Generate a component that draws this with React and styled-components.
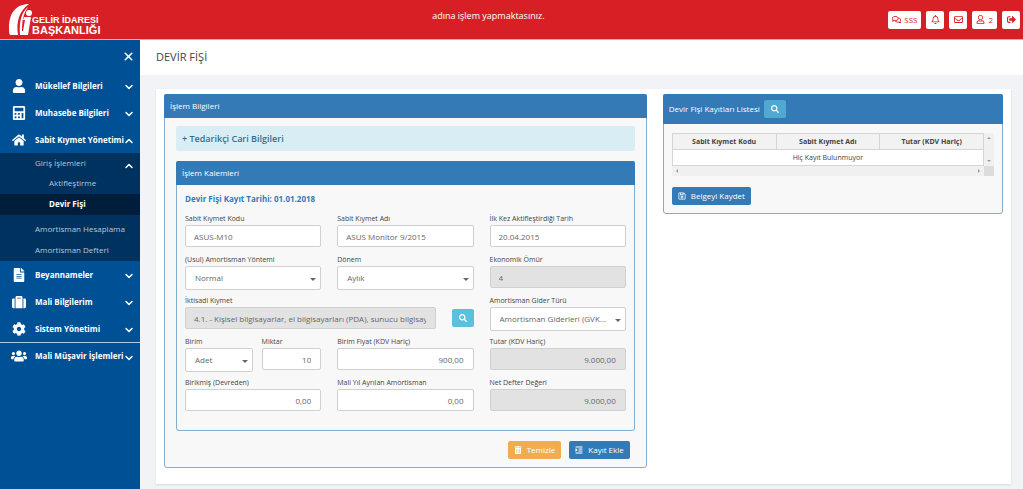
import React, { useState } from 'react';
import styled, { createGlobalStyle } from 'styled-components';
import {
  FaUser, FaCalculator, FaHome, FaFileAlt, FaSuitcase, FaCog, FaUsers,
  FaSearch, FaSignOutAlt, FaRegBell, FaRegEnvelope, FaRegUser, FaRegComments,
  FaIndent, FaRegSave, FaTrashAlt
} from 'react-icons/fa';
import { FiChevronDown, FiChevronUp, FiX } from 'react-icons/fi';

const GlobalStyle = createGlobalStyle`
  * {
    box-sizing: border-box;
  }

  body {
    margin: 0;
    background: #f2f3f7;
    color: #444;
    font-family: 'Open Sans', sans-serif;
    font-size: 8px;
    line-height: 12px;
  }

  button, input, select {
    font: inherit;
    color: inherit;
  }
`;

const Header = styled.header`
  display: grid;
  grid-template-columns: auto 1fr auto;
  align-items: center;
  height: 40px;
  padding: 0 3px 0 8px;
  background: #d91f26;
  border-bottom: 1px solid #f0a0a2;
  color: #fff;
`;

const Logo = styled.a`
  display: flex;
  align-items: center;
  color: #fff;
  text-decoration: none;
`;

const LogoText = styled.span`
  display: grid;
  padding-top: 13px;
  font: bold 9px/9px 'Liberation Sans', Arial, sans-serif;
`;

const LogoWide = styled.span`
  font-size: 11px;
  line-height: 11px;
`;

const Notice = styled.div`
  padding-bottom: 8px;
  font-size: 9px;
  text-align: center;
`;

const HeaderActions = styled.nav`
  display: flex;
  justify-content: flex-end;
  gap: 5px;
  padding-left: 12px;
`;

const HeaderButton = styled.button`
  display: flex;
  align-items: center;
  justify-content: center;
  gap: 3px;
  min-width: 18px;
  height: 18px;
  padding: 0 4px;
  border: 0;
  border-radius: 2px;
  background: #fff;
  color: #d91f26;
  cursor: pointer;

  svg {
    font-size: 9px;
  }
`;

const Layout = styled.div`
  display: grid;
  grid-template-columns: 140px minmax(0, 1fr);
  min-height: calc(100vh - 40px);
`;

const Sidebar = styled.aside`
  background: #005096;
  color: #fff;
`;

const CloseButton = styled.button`
  display: flex;
  margin: 0 5px 0 auto;
  padding: 10px 0 9px;
  border: 0;
  background: none;
  font-size: 13px;
  cursor: pointer;
`;

const MenuButton = styled.button`
  display: grid;
  grid-template-columns: 22px minmax(0, 1fr) 12px;
  gap: 5px;
  align-items: center;
  width: 100%;
  height: 27px;
  padding: 0 5px 0 8px;
  border: 0;
  border-top: ${props => props.$divided ? '1px solid #a9cdea' : '0'};
  background: none;
  font-weight: 700;
  text-align: left;
  white-space: nowrap;
  cursor: pointer;

  > svg:first-child {
    justify-self: center;
    font-size: ${props => props.$divided ? '16px' : '14px'};
  }

  > svg:last-child {
    margin-top: 3px;
    font-size: 12px;
    stroke-width: 3;
  }
`;

const SubMenu = styled.div`
  background: #00325f;
`;

const SubGroup = styled.div`
  margin-bottom: 4px;
`;

const SubToggle = styled.button`
  display: flex;
  justify-content: space-between;
  align-items: center;
  width: 100%;
  height: 20px;
  padding: 0 5px 0 35px;
  border: 0;
  background: none;
  color: #b8c9d9;
  cursor: pointer;

  svg {
    margin-top: 6px;
    color: #fff;
    font-size: 12px;
    stroke-width: 3;
  }
`;

const SubLink = styled.a`
  display: block;
  padding: 4px 0 5px ${props => props.$nested ? '49px' : '35px'};
  background: ${props => props.$active ? '#001d3b' : 'none'};
  color: ${props => props.$active ? '#fff' : '#b8c9d9'};
  font-weight: ${props => props.$active ? 700 : 400};
  text-decoration: none;
`;

const PageTitle = styled.h1`
  margin: 0;
  padding: 9px 16px 10px;
  background: #fff;
  font-size: 11px;
  font-weight: 400;
  line-height: 16px;
`;

const Card = styled.div`
  display: grid;
  grid-template-columns: 7fr 5fr;
  align-items: start;
  margin: 14px 12px 4px 16px;
  padding: 5px 0 16px;
  background: #fff;
  box-shadow: 0 1px 2px #d8dade;
`;

const Column = styled.div`
  min-width: 0;
  padding: 0 8px;
`;

const Panel = styled.section`
  border: 1px solid #80add2;
  border-radius: 3px;
  background: #f8f8f8;
`;

const PanelHeader = styled.h2`
  display: flex;
  align-items: center;
  gap: 4px;
  height: ${props => props.$tall ? '30px' : '24px'};
  margin: -1px -1px 0;
  padding: 0 6px;
  border-radius: 2px 2px 0 0;
  background: #337ab7;
  color: #fff;
  font-size: 8px;
  font-weight: 400;
`;

const PanelBody = styled.div`
  padding: 8px 11px 8px;
`;

const Collapsed = styled.button`
  display: block;
  width: 100%;
  height: 25px;
  margin-bottom: 10px;
  padding: 0 6px;
  border: 0;
  border-radius: 2px;
  background: #d9edf4;
  color: #31708f;
  font-size: 9px;
  font-weight: 600;
  text-align: left;
  cursor: pointer;
`;

const FormBody = styled.form`
  padding: 8px 8px 17px;
`;

const FormDate = styled.h3`
  margin: 0 0 9px;
  color: #337ab7;
  font-size: 8px;
  font-weight: 700;
`;

const FieldGrid = styled.div`
  display: grid;
  grid-template-columns: repeat(3, minmax(0, 1fr));
  grid-auto-rows: 35px;
  gap: 6px 16px;
`;

const FieldBox = styled.div`
  grid-column: span ${props => props.$span || 1};
  min-width: 0;
`;

const Label = styled.label`
  display: block;
  height: 11px;
  font-size: 7px;
  line-height: 10px;
  white-space: nowrap;
`;

const Input = styled.input`
  display: block;
  width: 100%;
  min-width: 0;
  height: 22px;
  padding: 0 9px 0 8px;
  border: 1px solid #d0d0d0;
  border-radius: 2px;
  background: #fff;
  color: #666;
  text-align: ${props => props.$numeric ? 'right' : 'left'};

  &:read-only {
    background: #e2e2e2;
  }
`;

const SelectBox = styled.div`
  position: relative;

  &::after {
    content: '';
    position: absolute;
    top: 12px;
    right: 5px;
    border: 3px solid transparent;
    border-top-color: #666;
    border-bottom: 0;
    pointer-events: none;
  }
`;

const Select = styled.select`
  display: block;
  width: 100%;
  height: 24px;
  padding: 0 16px 0 9px;
  border: 1px solid #d0d0d0;
  border-radius: 2px;
  appearance: none;
  background: #fff;
  color: #666;
  text-overflow: ellipsis;
`;

const Pair = styled.div`
  display: grid;
  grid-template-columns: 68fr 60fr;
  gap: 9px;
`;

const SearchRow = styled.div`
  display: flex;
  align-items: center;
  gap: 16px;
`;

const tones = {
  primary: '#337ab7',
  warning: '#f0ad4e',
  info: '#5bc0de',
  muted: '#4fa9d0'
};

const Button = styled.button`
  display: inline-flex;
  align-items: center;
  justify-content: center;
  gap: 5px;
  flex: none;
  min-width: 22px;
  height: 18px;
  padding: 0 6px;
  border: 0;
  border-radius: 2px;
  background: ${props => tones[props.$tone]};
  color: #fff;
  cursor: pointer;
`;

const Actions = styled.div`
  display: flex;
  justify-content: flex-end;
  gap: 8px;
  padding: 10px 5px 0;
`;

const ListBody = styled.div`
  padding: 9px 8px 8px;
`;

const TableFrame = styled.div`
  display: grid;
  grid-template-columns: minmax(0, 1fr) 10px;
  grid-template-rows: auto 10px;
  margin-bottom: 11px;
`;

const Table = styled.table`
  width: 100%;
  border-collapse: collapse;
  table-layout: fixed;
  background: #fff;
  font-size: 7px;
  line-height: 9px;
  text-align: center;

  th, td {
    height: 16px;
    padding: 0;
    border: 1px solid #d5d5d5;
  }

  th {
    background: #f2f2f2;
  }
`;

const ScrollTrack = styled.div`
  display: flex;
  flex-direction: ${props => props.$vertical ? 'column' : 'row'};
  align-items: center;
  justify-content: space-between;
  padding: ${props => props.$vertical ? '3px 0' : '0 3px'};
  background: #f0f0f0;
  color: #999;

  svg {
    width: 4px;
    height: 4px;
    fill: currentColor;
  }
`;

const ScrollCorner = styled.div`
  background: #dcdcdc;
`;

const Field = ({ id, label, span, children, ...rest }) => (
  <FieldBox $span={span}>
    <Label htmlFor={id}>{label}</Label>
    {children || <Input id={id} {...rest} />}
  </FieldBox>
);

const SelectField = ({ id, label, value }) => (
  <Field id={id} label={label}>
    <SelectBox>
      <Select id={id} defaultValue={value}>
        <option>{value}</option>
      </Select>
    </SelectBox>
  </Field>
);

const MenuItem = ({ icon: Icon, label, open, ...rest }) => (
  <MenuButton aria-expanded={!!open} {...rest}>
    <Icon />
    {label}
    {open ? <FiChevronUp /> : <FiChevronDown />}
  </MenuButton>
);

const GibLogo = () => (
  <Logo href="#">
    <svg width="24" height="32" viewBox="0 0 24 32" fill="#fff">
      <path d="M21 0C8 0 1 9 1 24c0 3 0 5 1 7h8c-2-13 1-24 11-31z" />
      <path d="M20 3c-6 5-9 13-8 28h8l3-18h-7l-1 3h2l-2 11h-1c0-9 1-17 6-24z" />
      <circle cx="21" cy="9" r="3" />
    </svg>
    <LogoText>
      <span>GELİR İDARESİ</span>
      <LogoWide>BAŞKANLIĞI</LogoWide>
    </LogoText>
  </Logo>
);

const App = () => {
  const [open, setOpen] = useState(true);

  return (
    <>
      <GlobalStyle />
      <Header>
        <GibLogo />
        <Notice>adına işlem yapmaktasınız.</Notice>
        <HeaderActions>
          <HeaderButton><FaRegComments /> SSS</HeaderButton>
          <HeaderButton aria-label="Bildirimler"><FaRegBell /></HeaderButton>
          <HeaderButton aria-label="Mesajlar"><FaRegEnvelope /></HeaderButton>
          <HeaderButton><FaRegUser /> 2</HeaderButton>
          <HeaderButton aria-label="Çıkış"><FaSignOutAlt /></HeaderButton>
        </HeaderActions>
      </Header>
      <Layout>
        <Sidebar>
          <CloseButton aria-label="Kapat"><FiX color="#fff" strokeWidth={3} /></CloseButton>
          <MenuItem icon={FaUser} label="Mükellef Bilgileri" />
          <MenuItem icon={FaCalculator} label="Muhasebe Bilgileri" />
          <MenuItem icon={FaHome} label="Sabit Kıymet Yönetimi" open={open} onClick={() => setOpen(!open)} />
          {open && (
            <SubMenu>
              <SubGroup>
                <SubToggle>Giriş İşlemleri <FiChevronUp /></SubToggle>
                <SubLink href="#" $nested>Aktifleştirme</SubLink>
                <SubLink href="#" $nested $active>Devir Fişi</SubLink>
              </SubGroup>
              <SubLink href="#">Amortisman Hesaplama</SubLink>
              <SubLink href="#">Amortisman Defteri</SubLink>
            </SubMenu>
          )}
          <MenuItem icon={FaFileAlt} label="Beyannameler" />
          <MenuItem icon={FaSuitcase} label="Mali Bilgilerim" />
          <MenuItem icon={FaCog} label="Sistem Yönetimi" />
          <MenuItem icon={FaUsers} label="Mali Müşavir İşlemleri" $divided />
        </Sidebar>
        <main>
          <PageTitle>DEVİR FİŞİ</PageTitle>
          <Card>
            <Column>
              <Panel>
                <PanelHeader>İşlem Bilgileri</PanelHeader>
                <PanelBody>
                  <Collapsed>+ Tedarikçi Cari Bilgileri</Collapsed>
                  <Panel>
                    <PanelHeader>İşlem Kalemleri</PanelHeader>
                    <FormBody>
                      <FormDate>Devir Fişi Kayıt Tarihi: 01.01.2018</FormDate>
                      <FieldGrid>
                        <Field id="kod" label="Sabit Kıymet Kodu" defaultValue="ASUS-M10" />
                        <Field id="ad" label="Sabit Kıymet Adı" defaultValue="ASUS Monitor 9/2015" />
                        <Field id="tarih" label="İlk Kez Aktifleştirdiği Tarih" defaultValue="20.04.2015" />
                        <SelectField id="yontem" label="(Usul) Amortisman Yöntemi" value="Normal" />
                        <SelectField id="donem" label="Dönem" value="Aylık" />
                        <Field id="omur" label="Ekonomik Ömür" defaultValue="4" readOnly />
                        <Field id="kiymet" label="İktisadi Kıymet" span={2}>
                          <SearchRow>
                            <Input
                              id="kiymet"
                              defaultValue="4.1. - Kişisel bilgisayarlar, el bilgisayarları (PDA), sunucu bilgisayarları"
                              readOnly
                            />
                            <Button type="button" $tone="info" aria-label="Ara"><FaSearch /></Button>
                          </SearchRow>
                        </Field>
                        <SelectField id="gider" label="Amortisman Gider Türü" value="Amortisman Giderleri (GVK..." />
                        <Pair>
                          <SelectField id="birim" label="Birim" value="Adet" />
                          <Field id="miktar" label="Miktar" defaultValue="10" $numeric />
                        </Pair>
                        <Field id="fiyat" label="Birim Fiyat (KDV Hariç)" defaultValue="900,00" $numeric />
                        <Field id="tutar" label="Tutar (KDV Hariç)" defaultValue="9.000,00" $numeric readOnly />
                        <Field id="birikmis" label="Birikmiş (Devreden)" defaultValue="0,00" $numeric />
                        <Field id="ayrilan" label="Mali Yıl Ayrılan Amortisman" defaultValue="0,00" $numeric />
                        <Field id="net" label="Net Defter Değeri" defaultValue="9.000,00" $numeric readOnly />
                      </FieldGrid>
                    </FormBody>
                  </Panel>
                  <Actions>
                    <Button $tone="warning"><FaTrashAlt /> Temizle</Button>
                    <Button $tone="primary"><FaIndent /> Kayıt Ekle</Button>
                  </Actions>
                </PanelBody>
              </Panel>
            </Column>
            <Column>
              <Panel>
                <PanelHeader $tall>
                  Devir Fişi Kayıtları Listesi
                  <Button $tone="muted" aria-label="Ara"><FaSearch /></Button>
                </PanelHeader>
                <ListBody>
                  <TableFrame>
                    <Table>
                      <thead>
                        <tr>
                          <th>Sabit Kıymet Kodu</th>
                          <th>Sabit Kıymet Adı</th>
                          <th>Tutar (KDV Hariç)</th>
                        </tr>
                      </thead>
                      <tbody>
                        <tr><td colSpan={3}>Hiç Kayıt Bulunmuyor</td></tr>
                      </tbody>
                    </Table>
                    <ScrollTrack $vertical>
                      <svg viewBox="0 0 4 4"><path d="M0 3l2-2 2 2z" /></svg>
                      <svg viewBox="0 0 4 4"><path d="M0 1l2 2 2-2z" /></svg>
                    </ScrollTrack>
                    <ScrollTrack>
                      <svg viewBox="0 0 4 4"><path d="M3 0L1 2l2 2z" /></svg>
                      <svg viewBox="0 0 4 4"><path d="M1 0l2 2-2 2z" /></svg>
                    </ScrollTrack>
                    <ScrollCorner />
                  </TableFrame>
                  <Button $tone="primary"><FaRegSave /> Belgeyi Kaydet</Button>
                </ListBody>
              </Panel>
            </Column>
          </Card>
        </main>
      </Layout>
    </>
  );
};

export default App;
